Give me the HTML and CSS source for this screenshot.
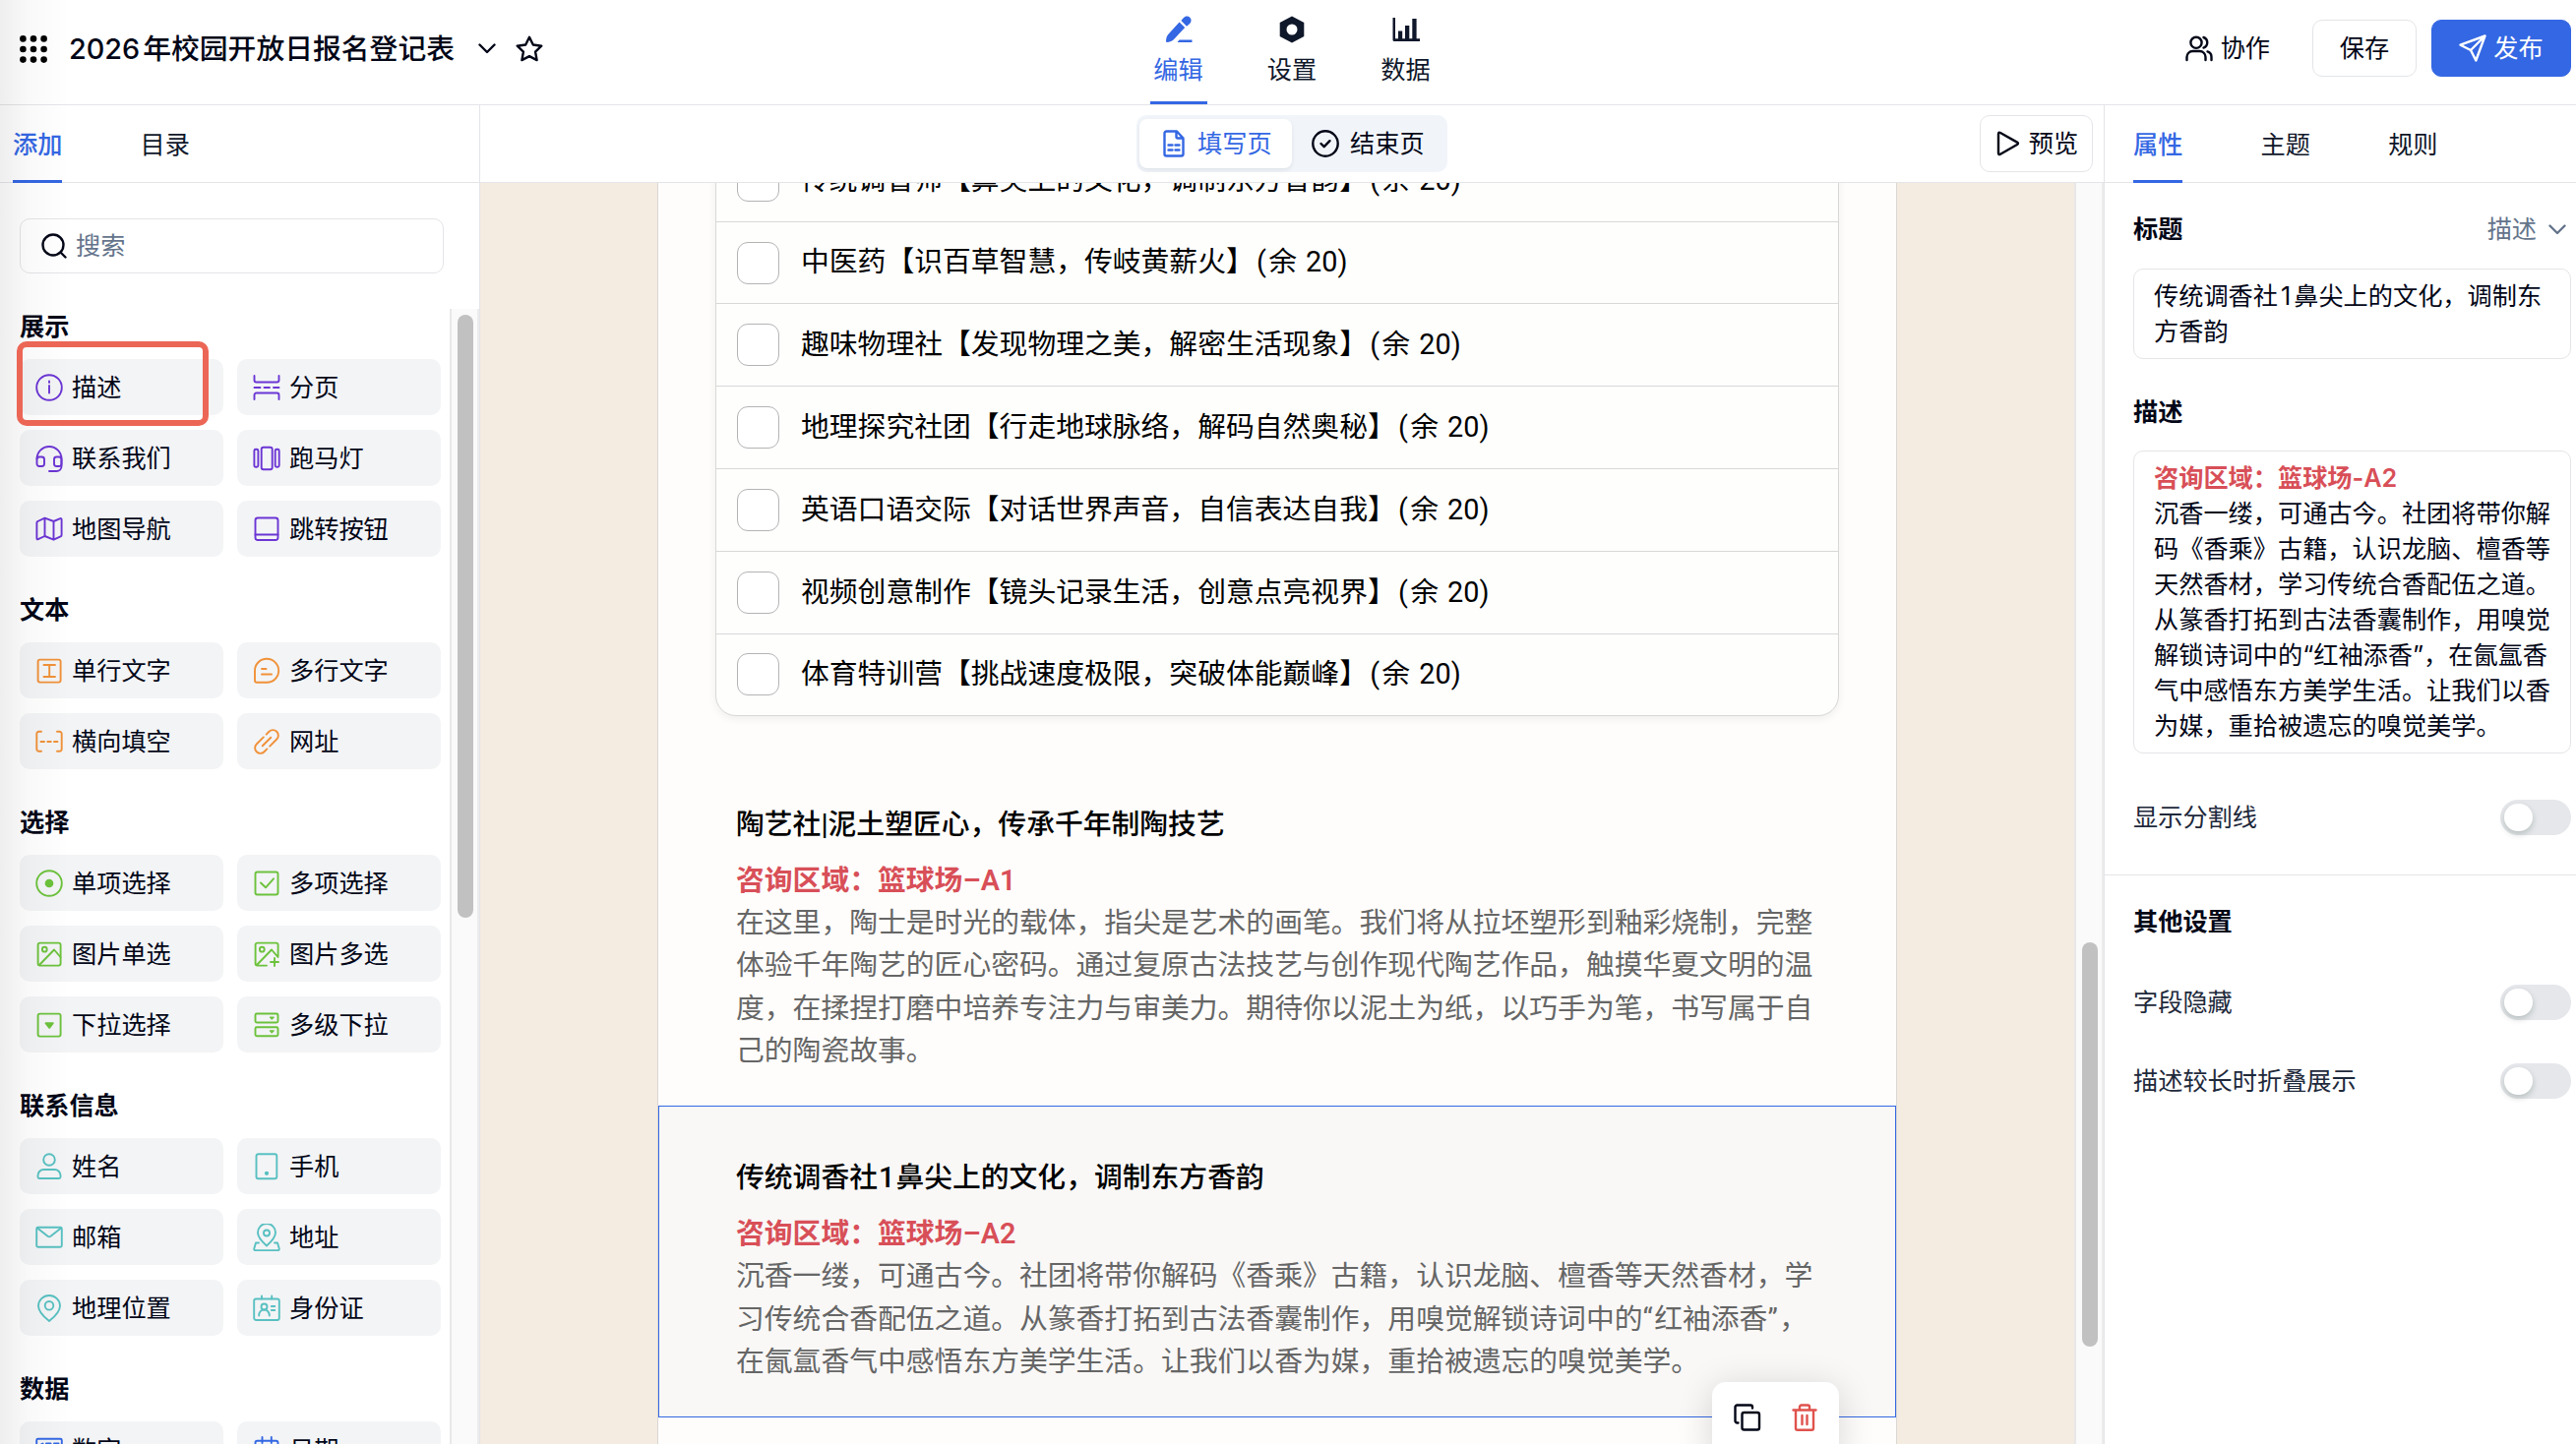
FILE: index.html
```html
<!DOCTYPE html>
<html lang="zh-CN">
  <head>
    <meta charset="UTF-8" />
    <meta name="viewport" content="width=device-width, initial-scale=1.0" />
    <title>2026年校园开放日报名登记表</title>
    <link rel="stylesheet" href="styles.css">
  </head>
  <body>
    <!-- Header -->
    <header class="header">
      <div class="header-left">
        <svg class="dots" viewBox="0 0 28 28">
          <circle cx="3.4" cy="3.4" r="3.3"/><circle cx="14" cy="3.4" r="3.3"/><circle cx="24.6" cy="3.4" r="3.3"/>
          <circle cx="3.4" cy="14" r="3.3"/><circle cx="14" cy="14" r="3.3"/><circle cx="24.6" cy="14" r="3.3"/>
          <circle cx="3.4" cy="24.6" r="3.3"/><circle cx="14" cy="24.6" r="3.3"/><circle cx="24.6" cy="24.6" r="3.3"/>
        </svg>
        <h1><span class="year">2026</span>年校园开放日报名登记表</h1>
        <svg class="line chevron" viewBox="0 0 18 11"><path d="M1.5 1.5 9 9l7.5-7.5"/></svg>
        <svg class="line star" viewBox="0 0 28 28"><path d="M14 1.8l3.8 7.7 8.5 1.2-6.2 6 1.5 8.4-7.6-4-7.6 4 1.5-8.4-6.2-6 8.5-1.2z"/></svg>
      </div>
      <nav class="main-tabs">
        <a class="main-tab active">
          <svg viewBox="0 0 28 28"><path d="M1.2 27c-.4-3 .2-6 2-8L14.6 6.6l5.6 5.4L9.5 23.5C7.500 25.500 5 27 1.200 27zM16.400 5l2.300-2.700c2-2.300 5-2.200 6.600-.6 1.800 1.800 1.700 4.400-.1 6.400L22 10.700z"/><path d="M14.500 24.600H27.500V27H12.500z"/></svg>
          <span>编辑</span>
        </a>
        <a class="main-tab">
          <svg viewBox="0 0 28 28"><path fill-rule="evenodd" d="M14 .6 26.300 7v14L14 27.400 1.700 21V7zM14 8.500a5.500 5.500 0 1 0 0 11 5.500 5.500 0 0 0 0-11z"/></svg>
          <span>设置</span>
        </a>
        <a class="main-tab">
          <svg viewBox="0 0 28 28"><path d="M.5 2H3v21.300h25V26H2Q.500 26 .500 24.500zM6 15.500h4.200V24H6zM13 10h4.300v14H13zM20.300 3h4.300v21h-4.300z"/></svg>
          <span>数据</span>
        </a>
      </nav>
      <div class="header-right">
        <a class="collab">
          <svg class="line" viewBox="0 0 28 28"><circle cx="11" cy="8.300" r="5.600"/><path d="M1.500 26v-3a6 6 0 0 1 6-6h7a6 6 0 0 1 6 6v3M18.500 3c5 1.800 5 8.800 0 10.600M22.500 17.400c2.500.8 4 2.900 4 5.600v3"/></svg>
          协作
        </a>
        <button class="btn">保存</button>
        <button class="btn btn-primary">
          <svg class="line" viewBox="0 0 28 28"><path d="M26.500 1.500 17.300 26.500 12 16 1.500 10.700zM26.500 1.500 12 16"/></svg>
          发布
        </button>
      </div>
    </header>

    <div class="workspace">
      <!-- Field list -->
      <aside class="sidebar">
        <div class="tabs">
          <a class="tab active">添加</a>
          <a class="tab">目录</a>
        </div>
        <div class="search">
          <svg class="line" viewBox="0 0 26 26"><circle cx="12" cy="12" r="10.500"/><path d="M19.500 19.500l5 5"/></svg>
          <span>搜索</span>
        </div>
        <div class="field-scroll">
          <div class="field-list">
            <section class="group purple">
              <h2>展示</h2>
              <div class="fields">
                <div class="field highlighted"><svg class="icon" viewBox="0 0 28 28"><circle cx="14" cy="14" r="12.800"/><path d="M14 12v7.500M14 7.500v1.400"/></svg>描述</div>
                <div class="field"><svg class="icon" viewBox="0 0 28 28"><path d="M1.500 2v4.500a2 2 0 0 0 2 2h21a2 2 0 0 0 2-2V2M1.500 26v-4.500a2 2 0 0 1 2-2h21a2 2 0 0 1 2 2V26M1.500 14H7.500M11.500 14h5.500M21 14h5.500"/></svg>分页</div>
                <div class="field"><svg class="icon" viewBox="0 0 28 28"><path d="M1.500 14.500a12.500 12.500 0 0 1 25 0v7.500a5 5 0 0 1-5 5H14"/><rect x="1.500" y="12.500" width="7.500" height="9.500" rx="2.500"/><rect x="19" y="12.500" width="7.500" height="9.500" rx="2.500"/></svg>联系我们</div>
                <div class="field"><svg class="icon" viewBox="0 0 28 28"><rect x="8.700" y="2.700" width="11" height="22.600" rx="2"/><rect x="1.400" y="4.800" width="4" height="18" rx="1.500"/><rect x="22.700" y="4.800" width="4" height="18" rx="1.500"/></svg>跑马灯</div>
                <div class="field"><svg class="icon" viewBox="0 0 28 28"><path d="M1.400 7.400q0-1 1-1.400l7.100-3.300L18.500 6l6.700-2.800q1.400-.5 1.400 1V20q0 1-1 1.400l-7.100 3.300-9-3.700-6.700 3.200q-1.400.5-1.400-1zM9.500 2.700V21M18.500 6v18.500"/></svg>地图导航</div>
                <div class="field"><svg class="icon" viewBox="0 0 28 28"><rect x="2.500" y="2.500" width="23" height="22.500" rx="2.500"/><path d="M2.500 19.500h23"/></svg>跳转按钮</div>
              </div>
            </section>

            <section class="group orange">
              <h2>文本</h2>
              <div class="fields">
                <div class="field"><svg class="icon" viewBox="0 0 28 28"><rect x="2.600" y="2.600" width="23" height="23" rx="2"/><path d="M8.500 8h11.500M8.500 20h11.500M14.200 8v12"/></svg>单行文字</div>
                <div class="field"><svg class="icon" viewBox="0 0 28 28"><path d="M14.200 1.800a12 12 0 0 1 0 24H4a2 2 0 0 1-2-2v-10a12 12 0 0 1 12.200-12zM9 12h4.500M9 17.500h10"/></svg>多行文字</div>
                <div class="field"><svg class="icon" viewBox="0 0 28 28"><path d="M6 3.800H3.500a2.200 2.200 0 0 0-2.200 2.200v15.500a2.200 2.200 0 0 0 2.200 2.200H6M22 3.800h2.500a2.200 2.200 0 0 1 2.200 2.200v15.500a2.200 2.200 0 0 1-2.200 2.200H22M5.500 14h3.500M12.300 14h3.500M19 14h3.500"/></svg>横向填空</div>
                <div class="field"><svg class="icon" viewBox="0 0 28 28"><g transform="rotate(-45 14 14)"><path d="M15 8.500H5a5.500 5.500 0 0 0 0 11h4M13 19.500h10a5.500 5.500 0 0 0 0-11h-4M8 14h12"/></g></svg>网址</div>
              </div>
            </section>

            <section class="group green">
              <h2>选择</h2>
              <div class="fields">
                <div class="field"><svg class="icon" viewBox="0 0 28 28"><circle cx="14" cy="14" r="12.800"/><circle class="solid" cx="14" cy="14" r="3.400"/></svg>单项选择</div>
                <div class="field"><svg class="icon" viewBox="0 0 28 28"><rect x="2.500" y="2.500" width="23" height="23" rx="2"/><path d="M8 13.500l5 4.800 8-9"/></svg>多项选择</div>
                <div class="field"><svg class="icon" viewBox="0 0 28 28"><rect x="2.600" y="2.600" width="23" height="23" rx="2"/><circle cx="9.300" cy="9.200" r="2.400"/><path d="M4 25 19 9.500l6.500 7.500"/></svg>图片单选</div>
                <div class="field"><svg class="icon" viewBox="0 0 28 28"><path d="M14 25.600H4.600a2 2 0 0 1-2-2v-19a2 2 0 0 1 2-2h19a2 2 0 0 1 2 2V16M4 25 19 9.500l6.500 7.500M22 18v8M18 22h8"/><circle cx="9.300" cy="9.200" r="2.400"/></svg>图片多选</div>
                <div class="field"><svg class="icon" viewBox="0 0 28 28"><rect x="2.600" y="2.600" width="23" height="23" rx="2"/><path class="solid" d="M10.500 12.200h7.300l-3.600 4.600z"/></svg>下拉选择</div>
                <div class="field"><svg class="icon" viewBox="0 0 28 28"><rect x="2.500" y="2.500" width="23" height="9" rx="1.500"/><rect x="2.500" y="16.300" width="23" height="9" rx="1.500"/><path class="solid small" d="M17.500 6h4l-2 2.200zM17.500 19.800h4l-2 2.200z"/></svg>多级下拉</div>
              </div>
            </section>

            <section class="group teal">
              <h2>联系信息</h2>
              <div class="fields">
                <div class="field"><svg class="icon" viewBox="0 0 28 28"><circle cx="14" cy="7" r="5.800"/><path d="M2.500 24.500v-1.500a6 6 0 0 1 6-6h11a6 6 0 0 1 6 6v1.500a1.500 1.500 0 0 1-1.500 1.500H4a1.500 1.500 0 0 1-1.500-1.500z"/></svg>姓名</div>
                <div class="field"><svg class="icon" viewBox="0 0 28 28"><rect x="3.500" y="1.200" width="20.800" height="25" rx="2"/><circle class="solid" cx="14" cy="20.800" r="1.200"/></svg>手机</div>
                <div class="field"><svg class="icon" viewBox="0 0 28 28"><rect x="1.200" y="3.800" width="25.600" height="20" rx="1.500"/><path d="M2 4.500l10.500 8.300q1.500 1 3 0L26 4.500"/></svg>邮箱</div>
                <div class="field"><svg class="icon" viewBox="0 0 28 28"><path d="M14 22.500q-9-8-9-13.500a9 9 0 0 1 18 0q0 5.500-9 13.500z"/><circle cx="14" cy="9.500" r="3"/><path d="M6 19.500H3L1.200 25.500q0 1.700 1.500 1.700h22.600q1.500 0 1.500-1.700L25 19.500h-3"/></svg>地址</div>
                <div class="field"><svg class="icon" viewBox="0 0 28 28"><path d="M14 27Q3 18.500 3 11.500a11 10.500 0 0 1 22 0Q25 18.500 14 27z"/><circle cx="14" cy="11.300" r="4.300"/></svg>地理位置</div>
                <div class="field"><svg class="icon" viewBox="0 0 28 28"><rect x="1.200" y="4.500" width="25.600" height="21.500" rx="2"/><path d="M9 1.500v3M19.200 1.500v3M6.200 21.500c0-8 10.600-8 10.600 0M18.800 12h3.500M18.800 16h3.500"/><circle cx="11.500" cy="12.500" r="3"/></svg>身份证</div>
              </div>
            </section>

            <section class="group blue">
              <h2>数据</h2>
              <div class="fields">
                <div class="field"><svg class="icon" viewBox="0 0 28 28"><rect x="1.200" y="2.800" width="25.600" height="22.500" rx="1.500"/><path d="M5.500 8.500l2-1v10M11 7.500h4.500v5H11v5h4.500M19 7.500h4.500v10H19"/></svg>数字</div>
                <div class="field"><svg class="icon" viewBox="0 0 28 28"><rect x="2.500" y="4.800" width="23" height="21" rx="2"/><path d="M9.500 1v6M18.800 1v6M2.500 12h23"/></svg>日期</div>
              </div>
            </section>
          </div>
          <div class="scrollbar"><div class="thumb"></div></div>
        </div>
      </aside>

      <!-- Form canvas -->
      <main class="canvas">
        <div class="toolbar">
          <div class="segment">
            <a class="seg active">
              <svg class="line" viewBox="0 0 22 28"><path d="M14 1.500H3.500a2 2 0 0 0-2 2v21a2 2 0 0 0 2 2h15a2 2 0 0 0 2-2V8.500zM13.500 1.500v5.500a1.500 1.500 0 0 0 1.500 1.500h5.500M5.500 15.500h4M12.500 15.500h4M5.500 20.500h4M12.500 20.500h4"/></svg>
              填写页
            </a>
            <a class="seg">
              <svg class="line round" viewBox="0 0 28 28"><circle cx="14" cy="14" r="12.700"/><path d="M9.500 14l3.200 3.200 5.800-6"/></svg>
              结束页
            </a>
          </div>
          <button class="btn preview">
            <svg class="line" viewBox="0 0 24 26"><path d="M2 3.200q0-2.300 2-1.200l17 9.600q1.900 1.200 0 2.400L4 23.700q-2 1.100-2-1.200z"/></svg>
            预览
          </button>
        </div>

        <div class="stage">
          <div class="paper">
            <ul class="options">
              <li><i></i><span>传统调香师【鼻尖上的文化，调制东方香韵】<b>(</b>余 20)</span></li>
              <li><i></i><span>中医药【识百草智慧，传岐黄薪火】<b>(</b>余 20)</span></li>
              <li><i></i><span>趣味物理社【发现物理之美，解密生活现象】<b>(</b>余 20)</span></li>
              <li><i></i><span>地理探究社团【行走地球脉络，解码自然奥秘】<b>(</b>余 20)</span></li>
              <li><i></i><span>英语口语交际【对话世界声音，自信表达自我】<b>(</b>余 20)</span></li>
              <li><i></i><span>视频创意制作【镜头记录生活，创意点亮视界】<b>(</b>余 20)</span></li>
              <li><i></i><span>体育特训营【挑战速度极限，突破体能巅峰】<b>(</b>余 20)</span></li>
            </ul>

            <section class="block">
              <h3>陶艺社|泥土塑匠心，传承千年制陶技艺</h3>
              <p class="area">咨询区域：篮球场–A1</p>
              <p>在这里，陶士是时光的载体，指尖是艺术的画笔。我们将从拉坯塑形到釉彩烧制，完整<br>体验千年陶艺的匠心密码。通过复原古法技艺与创作现代陶艺作品，触摸华夏文明的温<br>度，在揉捏打磨中培养专注力与审美力。期待你以泥土为纸，以巧手为笔，书写属于自<br>己的陶瓷故事。</p>
            </section>

            <section class="block selected">
              <h3>传统调香社<span class="one">1</span>鼻尖上的文化，调制东方香韵</h3>
              <p class="area">咨询区域：篮球场–A2</p>
              <p>沉香一缕，可通古今。社团将带你解码《香乘》古籍，认识龙脑、檀香等天然香材，学<br>习传统合香配伍之道。从篆香打拓到古法香囊制作，用嗅觉解锁诗词中的<span class="quote">“</span>红袖添香<span class="quote">”</span>，<br>在氤氲香气中感悟东方美学生活。让我们以香为媒，重拾被遗忘的嗅觉美学。</p>
              <div class="actions">
                <svg class="line" viewBox="0 0 28 28"><rect x="8.500" y="9" width="17.500" height="17.500" rx="2"/><path d="M4.500 19.500H3.500a2 2 0 0 1-2-2V3.500a2 2 0 0 1 2-2h13.500a2 2 0 0 1 2 2v1"/></svg>
                <svg class="line delete" viewBox="0 0 28 28"><path d="M2.500 6.500h23M5 6.500V25a1.800 1.800 0 0 0 1.800 1.800h14.400A1.800 1.800 0 0 0 23 25V6.500M9 6V3.300a1.800 1.800 0 0 1 1.800-1.800h6.400A1.800 1.800 0 0 1 19 3.300V6M11.500 12v9M16.500 12v9"/></svg>
              </div>
            </section>
          </div>
          <div class="scrollbar"><div class="thumb"></div></div>
        </div>
      </main>

      <!-- Properties -->
      <aside class="props">
        <div class="tabs">
          <a class="tab active">属性</a>
          <a class="tab">主题</a>
          <a class="tab">规则</a>
        </div>
        <div class="prop-body">
          <div class="prop-row">
            <h4>标题</h4>
            <span class="type">描述 <svg class="line" viewBox="0 0 18 11"><path d="M1.500 1.500 9 9l7.500-7.500"/></svg></span>
          </div>
          <div class="input">传统调香社<span class="one">1</span>鼻尖上的文化，调制东<br>方香韵</div>
          <h4 class="desc-title">描述</h4>
          <div class="input"><span class="area">咨询区域：篮球场-A2</span><br>沉香一缕，可通古今。社团将带你解<br>码《香乘》古籍，认识龙脑、檀香等<br>天然香材，学习传统合香配伍之道。<br>从篆香打拓到古法香囊制作，用嗅觉<br>解锁诗词中的“红袖添香”，在氤氲香<br>气中感悟东方美学生活。让我们以香<br>为媒，重拾被遗忘的嗅觉美学。</div>
          <div class="prop-row divider-row"><span>显示分割线</span><div class="switch"></div></div>
        </div>
        <div class="prop-body other">
          <h4>其他设置</h4>
          <div class="prop-row"><span>字段隐藏</span><div class="switch"></div></div>
          <div class="prop-row"><span>描述较长时折叠展示</span><div class="switch"></div></div>
        </div>
      </aside>
    </div>
    <div class="edge-shadow"></div>
  </body>
</html>
```
FILE: styles.css
```css
* {
  box-sizing: border-box;
}

body {
  margin: 0;
  width: 2618px;
  height: 1468px;
  overflow: hidden;
  display: flex;
  flex-direction: column;
  background: #fff;
  color: #020617;
  font-family: Inter, "Noto Sans CJK SC", sans-serif;
  font-size: 25.2px;
  line-height: 36px;
  white-space: nowrap;
  text-autospace: no-autospace;
}

h1, h2, h3, h4, p, ul {
  margin: 0;
  padding: 0;
}

svg {
  display: block;
  flex: none;
}

.line {
  fill: none;
  stroke: currentColor;
  stroke-width: 2.4;
  stroke-linecap: round;
  stroke-linejoin: round;
}

/* Header */
.header {
  display: grid;
  grid-template-columns: 1fr auto 1fr;
  height: 107px;
  flex: none;
  border-bottom: 1px solid #e4e5e8;
}

.header-left {
  display: flex;
  align-items: center;
  height: 99px;
  padding-left: 20px;
}

.dots {
  width: 28px;
  height: 28px;
}

.header h1 {
  margin-left: 22px;
  font-size: 28.8px;
  font-weight: 500;
}

.year {
  margin-right: 3px;
}

.chevron {
  width: 18px;
  height: 11px;
  margin-left: 24px;
}

.star {
  width: 28px;
  height: 28px;
  margin-left: 20px;
}

.main-tabs {
  display: flex;
  gap: 57.5px;
  margin-left: 8px;
}

.main-tab {
  display: flex;
  flex-direction: column;
  align-items: center;
  width: 58px;
  padding-top: 16px;
  color: #0f172a;
}

.main-tab svg {
  width: 28px;
  height: 28px;
  margin-bottom: 9px;
  fill: currentColor;
}

.main-tab.active {
  color: #3467e3;
  border-bottom: 3px solid #3467e3;
}

.header-right {
  display: flex;
  justify-content: flex-end;
  align-items: center;
  height: 98px;
  padding-right: 5px;
}

.collab {
  display: flex;
  align-items: center;
  gap: 8px;
  margin-right: 43px;
}

.collab svg {
  width: 28px;
  height: 28px;
}

.btn {
  display: flex;
  align-items: center;
  justify-content: center;
  gap: 7px;
  width: 106px;
  height: 58px;
  padding: 0;
  border: 1px solid #e4e5e8;
  border-radius: 10px;
  background: #fff;
  color: inherit;
  font: inherit;
}

.btn-primary {
  width: 142px;
  margin-left: 15px;
  border-color: #3467e3;
  background: #3467e3;
  color: #fff;
}

.btn-primary svg {
  width: 28px;
  height: 28px;
}

/* Columns under the header */
.workspace {
  display: grid;
  grid-template-columns: 488px 1650px 480px;
  flex: 1;
  min-height: 0;
}

.tabs {
  display: flex;
  flex: none;
  gap: 79.2px;
  height: 79px;
  border-bottom: 1px solid #e4e5e8;
}

.tab {
  height: 79px;
  padding-top: 22px;
  color: #0f172a;
}

.tab.active {
  color: #3467e3;
  font-weight: 500;
  border-bottom: 3px solid #3467e3;
}

/* Left sidebar */
.sidebar {
  display: flex;
  flex-direction: column;
  min-height: 0;
  border-right: 1px solid #e4e5e8;
}

.sidebar .tabs {
  padding-left: 13px;
}

.search {
  display: flex;
  align-items: center;
  flex: none;
  gap: 9px;
  width: 431px;
  height: 56px;
  margin: 36px 0 36px 20px;
  padding-left: 21px;
  border: 1px solid #e4e5e8;
  border-radius: 10px;
}

.search svg {
  width: 26px;
  height: 26px;
}

.search span {
  color: #64748b;
}

.field-scroll {
  display: flex;
  flex: 1;
  min-height: 0;
  overflow: hidden;
}

.field-list {
  width: 457px;
  padding-left: 20px;
}

.scrollbar {
  width: 30px;
  flex: none;
  border-left: 2px solid #e8e8e8;
  border-right: 2px solid #ececec;
  background: #fafafa;
  padding-left: 6px;
}

.thumb {
  width: 16px;
  border-radius: 8px;
  background: #c1c1c1;
}

.sidebar .thumb {
  height: 613px;
  margin-top: 6px;
}

.group {
  margin-bottom: 36px;
}

.group h2 {
  margin-bottom: 15px;
  font-size: 25.2px;
  font-weight: 600;
}

.fields {
  display: grid;
  grid-template-columns: 207px 207px;
  gap: 15px 14px;
}

.field {
  position: relative;
  display: flex;
  align-items: center;
  gap: 9px;
  height: 57px;
  padding-left: 16px;
  border-radius: 10px;
  background: #f3f4f6;
}

/* Red callout round the chosen field */
.highlighted::after {
  content: "";
  position: absolute;
  z-index: 1;
  left: -3px;
  top: -18px;
  box-sizing: border-box;
  width: 195px;
  height: 86px;
  border: 6px solid #ec6656;
  border-radius: 10px;
}

.icon {
  width: 28px;
  height: 28px;
  fill: none;
  stroke: currentColor;
  stroke-width: 1.9;
  stroke-linecap: round;
  stroke-linejoin: round;
}

.solid {
  fill: currentColor;
}

.small {
  stroke-width: 1;
}

.purple svg { color: #6b35d4; }
.orange svg { color: #f09138; }
.green svg { color: #6cc23c; }
.teal svg { color: #58c0c1; }
.blue svg { color: #3467e3; }

/* Canvas */
.canvas {
  display: flex;
  flex-direction: column;
  min-height: 0;
}

.toolbar {
  display: flex;
  align-items: center;
  justify-content: space-between;
  flex: none;
  height: 79px;
  padding: 0 11px 0 667px;
  border-bottom: 1px solid #e4e5e8;
}

.segment {
  display: flex;
  align-items: center;
  width: 316px;
  height: 58px;
  padding-left: 3px;
  border-radius: 10px;
  background: #f1f5fa;
}

.seg {
  display: flex;
  align-items: center;
  gap: 11px;
  height: 50px;
  padding-left: 20px;
}

.seg svg {
  width: 22px;
  height: 28px;
}

.seg.active {
  gap: 13px;
  width: 155px;
  padding-left: 24px;
  border-radius: 8px;
  background: #fff;
  color: #3467e3;
  box-shadow: 0 2px 4px rgba(15, 23, 42, 0.08);
}

.seg .round {
  width: 28px;
}

.preview {
  width: 115px;
  gap: 9px;
  padding-left: 2px;
}

.preview svg {
  width: 24px;
  height: 26px;
}

.stage {
  display: flex;
  flex: 1;
  min-height: 0;
  padding-left: 180px;
  overflow: hidden;
  background: #f4ebe1;
}

.paper {
  width: 1260px;
  flex: none;
  margin-right: 180px;
  border: solid #d9d7d4;
  border-width: 0 1px;
  background: #fefdfb;
  font-family: Roboto, "Noto Sans CJK SC", sans-serif;
  font-size: 28.8px;
  line-height: 43.2px;
}

.canvas .thumb {
  height: 411px;
  margin-top: 772px;
}

.options {
  width: 1142px;
  margin: -45.2px 0 0 58px;
  border: 1px solid #d8d8d7;
  border-radius: 0 0 21px 21px;
  background: #fefefd;
  box-shadow: 0 3px 8px rgba(0, 0, 0, 0.06);
  list-style: none;
  color: #000;
  word-spacing: 2px;
}

.options li {
  display: flex;
  align-items: center;
  height: 83.8px;
  padding-left: 21px;
  border-bottom: 1px solid #d8d8d7;
}

.options li:last-child {
  height: 82px;
  border-bottom: none;
}

.options i {
  width: 43px;
  height: 43px;
  margin-right: 22px;
  border: 1px solid #b4b4b4;
  border-radius: 11px;
  background: #fff;
}

.options b {
  display: inline-block;
  width: 14.4px;
  text-align: center;
  font-weight: 400;
}

.block {
  position: relative;
  padding: 50.8px 0 33px 78px;
  border: 1px solid transparent;
}

.options + .block {
  margin-top: 37.2px;
}

.block h3 {
  margin-bottom: 14.2px;
  color: #000;
  font-size: 28.8px;
  font-weight: 500;
}

.block p {
  color: #666;
}

.block p.area, .area {
  color: #d84f58;
  font-weight: 600;
}

.block.selected {
  height: 317px;
  border-color: #3467e3;
  background: #f9f8f7;
}

.block .quote {
  letter-spacing: 1.5px;
}

.actions {
  position: absolute;
  top: 280px;
  right: 57px;
  display: flex;
  gap: 30px;
  width: 129px;
  height: 80px;
  padding: 22px 0 0 22px;
  border-radius: 14px;
  background: #fff;
  box-shadow: 0 6px 36px rgba(0, 0, 0, 0.16);
}

.actions svg {
  width: 28px;
  height: 28px;
}

.actions .delete {
  color: #e0524c;
}

.one {
  margin: 0 3px;
}

.block .one {
  margin: 0 1px;
}

/* Properties panel */
.props {
  border-left: 1px solid #e4e5e8;
}

.props .tabs {
  padding-left: 29px;
}

.prop-body {
  padding: 29px 5px 0 29px;
  color: #1e293b;
}

.prop-row {
  display: flex;
  align-items: center;
  justify-content: space-between;
  height: 36px;
}

.props h4 {
  color: #020617;
  font-size: 25.2px;
  font-weight: 600;
}

.type {
  display: flex;
  align-items: center;
  gap: 12px;
  padding-right: 5px;
  color: #64748b;
}

.type svg {
  width: 18px;
  height: 11px;
}

.input {
  margin-top: 22px;
  padding: 9px 0 9px 20px;
  border: 1px solid #e4e5e8;
  border-radius: 10px;
  color: #020617;
}

.desc-title {
  margin-top: 36px;
}

.props .desc-title + .input {
  margin-top: 21px;
}

.divider-row {
  margin-top: 47px;
}

.switch {
  width: 72px;
  height: 36px;
  padding: 4px;
  border-radius: 18px;
  background: #e5e7eb;
}

.switch::before {
  content: "";
  display: block;
  width: 29px;
  height: 28px;
  border-radius: 14px;
  background: #fff;
  box-shadow: 0 3px 6px rgba(0, 35, 11, 0.2);
}

.other {
  margin-top: 40px;
  border-top: 1px solid #e4e5e8;
}

.other .prop-row {
  margin-top: 46px;
}

.other .prop-row + .prop-row {
  margin-top: 44px;
}

/* Soft shade along the left window edge */
.edge-shadow {
  position: absolute;
  left: 0;
  top: 0;
  width: 72px;
  height: 1468px;
  background: linear-gradient(90deg, rgba(0, 0, 0, 0.065), rgba(0, 0, 0, 0.022) 40%, transparent);
}
```
